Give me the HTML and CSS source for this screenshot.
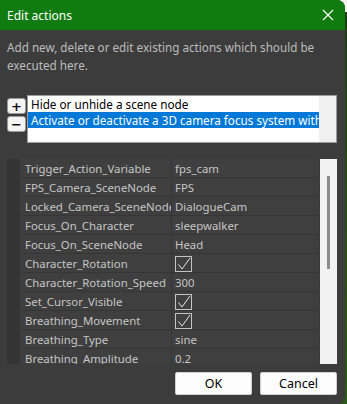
FILE: index.html
```html
<!DOCTYPE html>
<html>
<head>
<meta charset="utf-8">
<link rel="stylesheet" href="styles.css">
</head>
<body>
<div class="dialog">
  <div class="titlebar">
    <span class="title">Edit actions</span>
    <svg class="close" width="12" height="12" viewBox="0 0 12 12"><path d="M1 1 L11 11 M11 1 L1 11" stroke="#ffffff" stroke-width="1.2" fill="none"/></svg>
  </div>
  <div class="content">
    <p class="desc">Add new, delete or edit existing actions which should be executed here.</p>
    <div class="actions">
      <div class="pm">
        <button class="pmbtn">+</button>
        <button class="pmbtn">−</button>
      </div>
      <div class="listbox">
        <div class="items">
          <div class="item">Hide or unhide a scene node</div>
          <div class="item sel">Activate or deactivate a 3D camera focus system with</div>
        </div>
        <div class="lbscroll"></div>
      </div>
    </div>
    <div class="props">
      <div class="grid">
        <div class="gutter"></div>
        <div class="rows">
          <div class="row"><div class="name">Trigger_Action_Variable</div><div class="val">fps_cam</div></div>
          <div class="row"><div class="name">FPS_Camera_SceneNode</div><div class="val">FPS</div></div>
          <div class="row"><div class="name">Locked_Camera_SceneNode</div><div class="val">DialogueCam</div></div>
          <div class="row"><div class="name">Focus_On_Character</div><div class="val">sleepwalker</div></div>
          <div class="row"><div class="name">Focus_On_SceneNode</div><div class="val">Head</div></div>
          <div class="row"><div class="name">Character_Rotation</div><div class="val"><span class="check"><svg width="14" height="14" viewBox="0 0 14 14"><path d="M1.5 7.5 L5 12 L13 1" stroke="#e6e6e6" stroke-width="1" fill="none"/></svg></span></div></div>
          <div class="row"><div class="name">Character_Rotation_Speed</div><div class="val">300</div></div>
          <div class="row"><div class="name">Set_Cursor_Visible</div><div class="val"><span class="check"><svg width="14" height="14" viewBox="0 0 14 14"><path d="M1.5 7.5 L5 12 L13 1" stroke="#e6e6e6" stroke-width="1" fill="none"/></svg></span></div></div>
          <div class="row"><div class="name">Breathing_Movement</div><div class="val"><span class="check"><svg width="14" height="14" viewBox="0 0 14 14"><path d="M1.5 7.5 L5 12 L13 1" stroke="#e6e6e6" stroke-width="1" fill="none"/></svg></span></div></div>
          <div class="row"><div class="name">Breathing_Type</div><div class="val">sine</div></div>
          <div class="row"><div class="name">Breathing_Amplitude</div><div class="val">0.2</div></div>
        </div>
      </div>
      <div class="vscroll"><div class="thumb"></div></div>
    </div>
    <div class="footer">
      <button class="btn">OK</button>
      <button class="btn">Cancel</button>
    </div>
  </div>
</div>
</body>
</html>
```
FILE: styles.css
```css
html, body {
  margin: 0;
  padding: 0;
}
body {
  width: 347px;
  height: 404px;
  overflow: hidden;
  background: linear-gradient(#f4f4f4 0, #f4f4f4 12px, #1f3d14 12px, #2b5a1a 100%);
  font-family: "Noto Sans", "Open Sans", sans-serif;
}
.dialog {
  width: 345px;
  height: 404px;
  background: #3c3c3c;
  border-radius: 0 8px 8px 0;
  overflow: hidden;
  display: flex;
  flex-direction: column;
}
.titlebar {
  height: 30px;
  flex: none;
  background: #107c10;
  display: flex;
  align-items: center;
  justify-content: space-between;
  padding: 0 11px 0 7px;
}
.title {
  color: #ffffff;
  font-size: 12px;
}
.close {
  display: block;
}
.content {
  padding: 0 8px 0 7px;
  display: flex;
  flex-direction: column;
}
.desc {
  margin: 8px 0 0;
  font-size: 11.7px;
  line-height: 18px;
  color: #bdbdbd;
}
.actions {
  margin-top: 21px;
  display: flex;
  gap: 1px;
}
.pm {
  flex: none;
  display: flex;
  flex-direction: column;
  gap: 2px;
  padding-top: 3px;
}
.pmbtn {
  width: 19px;
  height: 16px;
  padding: 0;
  margin: 0;
  border: 1px solid #9a9a9a;
  border-radius: 3px;
  background: #f4f4f4;
  color: #111;
  font-family: "DejaVu Sans", sans-serif;
  font-weight: bold;
  font-size: 13px;
  line-height: 13px;
}
.listbox {
  flex: 1;
  min-width: 0;
  height: 46px;
  border: 1px solid #9b9b9b;
  background: #ffffff;
  display: flex;
}
.items {
  flex: 1;
  min-width: 0;
  overflow: hidden;
}
.item {
  height: 16px;
  line-height: 16px;
  padding-left: 3px;
  font-size: 11.7px;
  color: #000;
  white-space: nowrap;
  overflow: hidden;
}
.item.sel {
  background: #0078d7;
  color: #ffffff;
}
.lbscroll {
  flex: none;
  width: 17px;
  background: #f0f0f0;
}
.props {
  margin-top: 16px;
  height: 205px;
  display: flex;
  gap: 2px;
}
.grid {
  flex: 1;
  min-width: 0;
  display: flex;
  overflow: hidden;
  background: #3f3f3f;
}
.gutter {
  flex: none;
  width: 13px;
  background: #343434;
}
.rows {
  flex: 1;
}
.row {
  display: flex;
  height: 18px;
  border-bottom: 1px solid #363636;
  font-size: 11.4px;
  line-height: 20px;
  color: #c6c6c6;
}
.name {
  flex: none;
  width: 152px;
  padding-left: 5px;
  box-sizing: border-box;
  white-space: nowrap;
  overflow: hidden;
  border-right: 1px solid #363636;
}
.val {
  flex: 1;
  padding-left: 3px;
  display: flex;
  align-items: center;
  padding-top: 1px;
  line-height: 18px;
}
.check {
  width: 17px;
  height: 16px;
  border: 1px solid #c4c4c4;
  box-sizing: border-box;
  display: flex;
  align-items: center;
  justify-content: center;
}
.check svg {
  display: block;
}
.vscroll {
  flex: none;
  width: 17px;
  background: #f2f2f2;
  position: relative;
}
.thumb {
  position: absolute;
  left: 7px;
  top: 17px;
  width: 3px;
  height: 93px;
  background: #8c8c8c;
}
.footer {
  margin-top: 8px;
  display: flex;
  justify-content: flex-end;
  gap: 8px;
}
.btn {
  width: 77px;
  height: 23px;
  margin: 0;
  padding: 0;
  background: #fdfdfd;
  border: 1px solid #d0d0d0;
  border-radius: 2px;
  font-family: "Noto Sans", "Open Sans", sans-serif;
  font-size: 12.5px;
  color: #000;
}
```
